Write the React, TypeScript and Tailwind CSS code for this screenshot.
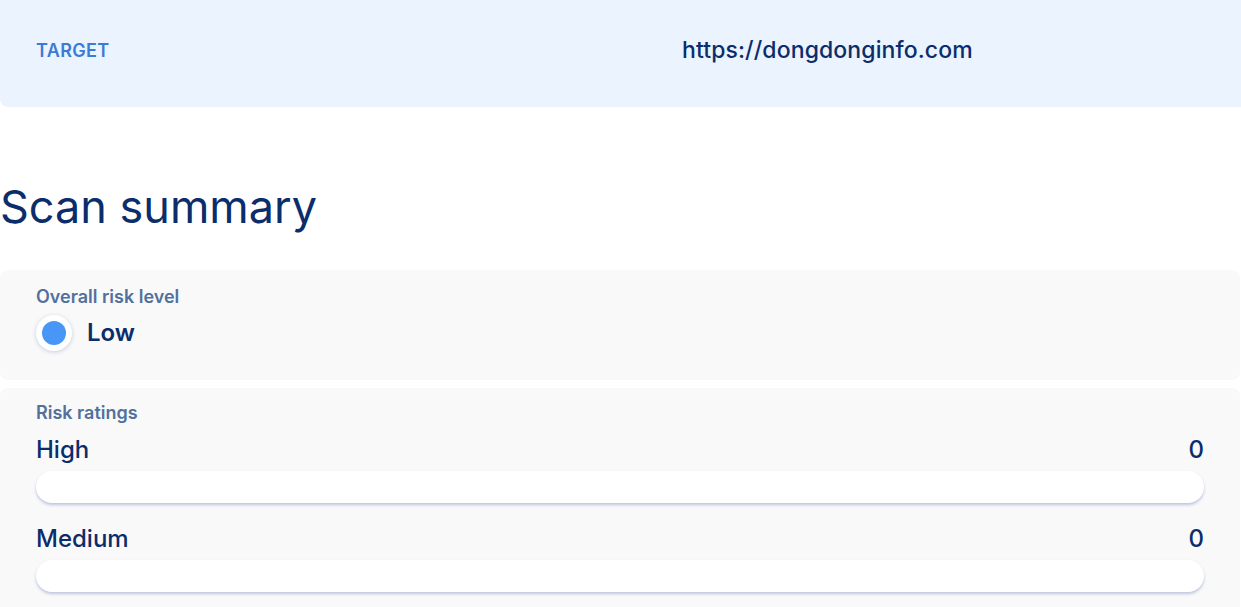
export default function App() {
  const ratings = [
    { label: "High", count: 0 },
    { label: "Medium", count: 0 },
  ];

  return (
    <div className="w-[1241px] h-[607px] overflow-hidden bg-white font-['Inter',sans-serif] text-[#0b2d6b]">
      <div className="w-[1260px] h-[107px] bg-[#eaf3fe] rounded-b-lg flex items-center pb-[6px]">
        <div className="w-[682px] pl-9 text-[18px] font-semibold tracking-[0.02em] text-[#3a7bd5]">
          TARGET
        </div>
        <div className="text-[23px] font-medium tracking-[0.005em]">https://dongdonginfo.com</div>
      </div>

      <h1 className="mt-[72px] text-[45px] leading-[56px] font-normal">
        Scan summary
      </h1>

      <div className="mt-[35px] w-[1240px] h-[110px] bg-[#f9f9fa] rounded-lg px-9 pt-[15px]">
        <div className="text-[18px] font-semibold text-[#52709b] leading-6">
          Overall risk level
        </div>
        <div className="mt-[6px] flex items-center gap-[15px]">
          <div className="w-9 h-9 rounded-full bg-white shadow-[0_1px_4px_rgba(60,80,130,0.25)] flex items-center justify-center">
            <div className="w-6 h-6 rounded-full bg-[#4896f6]" />
          </div>
          <div className="text-[24px] font-semibold">Low</div>
        </div>
      </div>

      <div className="mt-2 w-[1240px] bg-[#f9f9fa] rounded-lg px-9 pt-[13px] pb-6">
        <div className="text-[18px] font-semibold text-[#52709b] leading-6">
          Risk ratings
        </div>
        <div className="mt-[9px] flex flex-col gap-5">
          {ratings.map((r) => (
            <div key={r.label}>
              <div className="flex justify-between items-center text-[24px] font-medium leading-8">
                <span>{r.label}</span>
                <span>{r.count}</span>
              </div>
              <div className="mt-[5px] h-8 rounded-full bg-white shadow-[0_2px_3px_rgba(80,100,170,0.35)]" />
            </div>
          ))}
        </div>
      </div>
    </div>
  );
}
